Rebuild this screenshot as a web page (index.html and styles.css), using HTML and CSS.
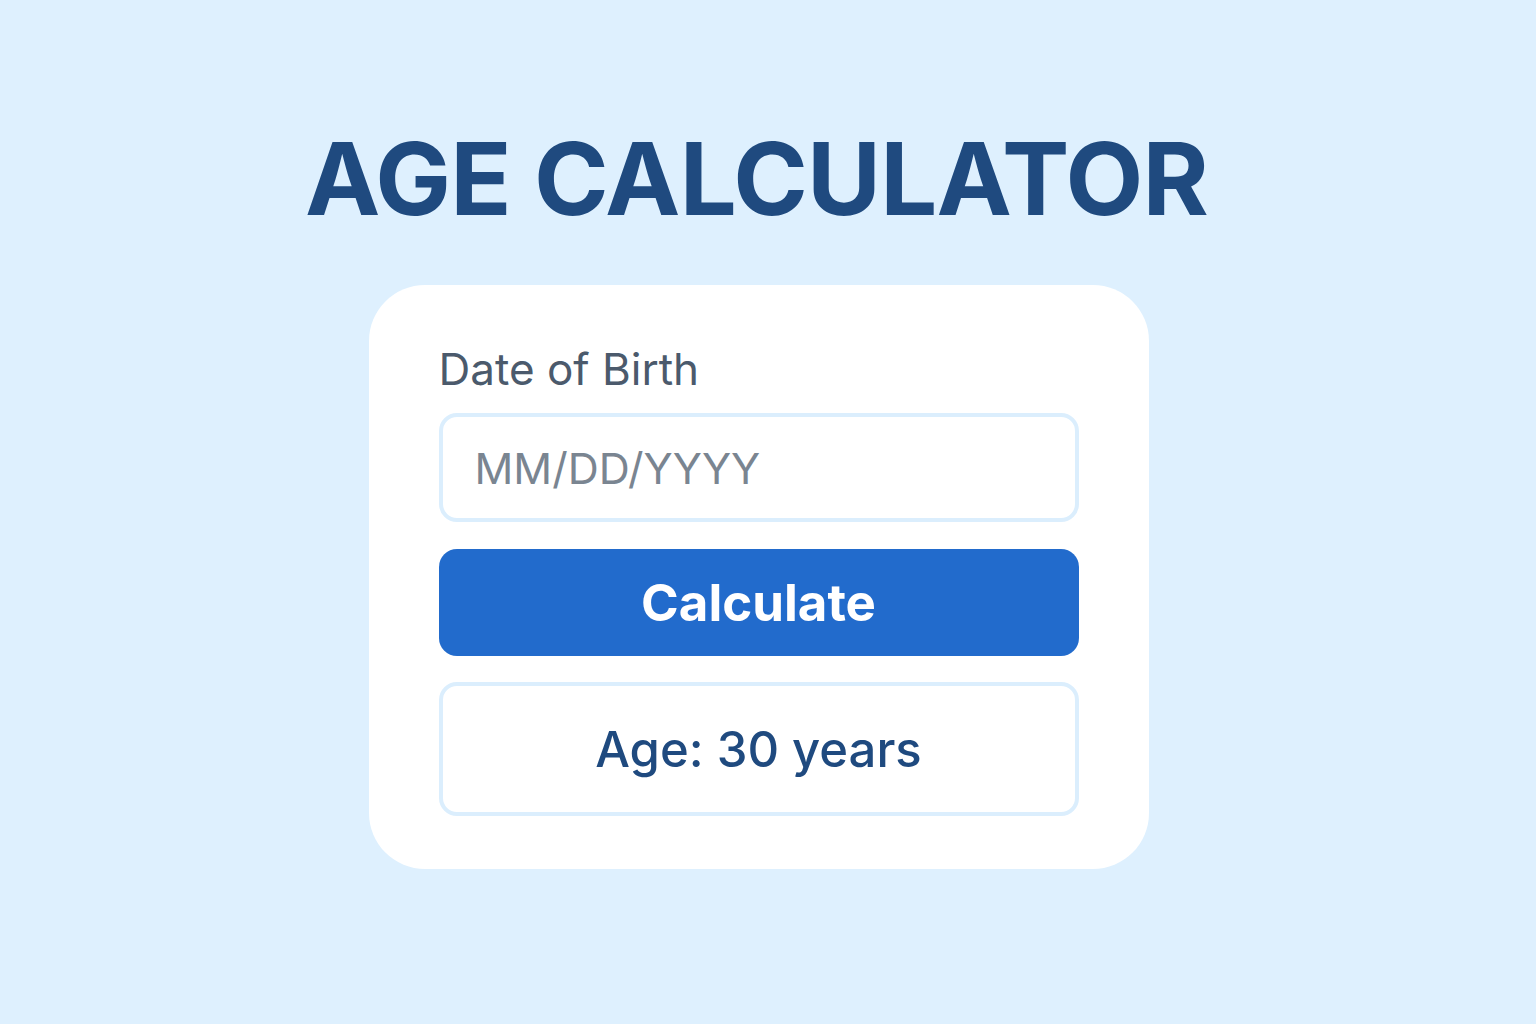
FILE: index.html
```html
<!DOCTYPE html>
<html lang="en">
<head>
    <meta charset="UTF-8">
    <meta name="viewport" content="width=device-width, initial-scale=1.0">
    <title>Age Calculator</title>
    <link rel="stylesheet" href="styles.css">
</head>
<body>
    <main class="page">
        <h1 class="title">AGE CALCULATOR</h1>

        <div class="card">
            <label for="dob" class="field-label">Date of Birth</label>
            <input type="text" id="dob" class="date-input" placeholder="MM/DD/YYYY">

            <button class="calc-btn" onclick="calculateAge()">Calculate</button>

            <div class="result-box" id="ageResult">Age: 30 years</div>
        </div>
    </main>

    <script>
        function calculateAge() {
            let value = document.getElementById("dob").value.trim();
            let parts = value.split("/");
            if (parts.length !== 3) return;

            let birth = new Date(parts[2], parts[0] - 1, parts[1]);
            if (isNaN(birth)) return;

            let today = new Date();
            let age = today.getFullYear() - birth.getFullYear();
            let m = today.getMonth() - birth.getMonth();
            if (m < 0 || (m === 0 && today.getDate() < birth.getDate())) {
                age--;
            }

            document.getElementById("ageResult").innerText = `Age: ${age} years`;
        }
    </script>
</body>
</html>
```

FILE: styles.css
```css
:root {
    --background: #def0fe;
    --navy: #1f4a7f;
    --primary-color: #226bcc;
    --soft-border: #dbeefd;
    --label-color: #4b5a6c;
    --placeholder: #7a8591;
}

* {
    box-sizing: border-box;
    margin: 0;
    padding: 0;
}

body {
    font-family: 'Inter', 'Noto Sans', sans-serif;
    background-color: var(--background);
    min-height: 100vh;
}

.page {
    display: flex;
    flex-direction: column;
    align-items: center;
    padding-top: 128px;
    padding-right: 19px;
}

.title {
    font-size: 101px;
    line-height: 1;
    font-weight: 700;
    letter-spacing: -0.8px;
    color: var(--navy);
    margin-bottom: 56px;
    margin-right: 4px;
}

.card {
    width: 780px;
    background: #fff;
    border-radius: 56px;
    padding: 58px 70px 53px;
    display: flex;
    flex-direction: column;
}

.field-label {
    font-size: 44px;
    line-height: 52px;
    color: var(--label-color);
    margin-bottom: 18px;
}

.date-input {
    height: 109px;
    border: 4px solid var(--soft-border);
    border-radius: 18px;
    padding: 0 32px;
    font-family: inherit;
    font-size: 43px;
    color: var(--navy);
    outline: none;
}

.date-input::placeholder {
    color: var(--placeholder);
}

.date-input:focus {
    border-color: #b9dcfb;
}

.calc-btn {
    margin-top: 27px;
    height: 107px;
    border: none;
    border-radius: 18px;
    background-color: var(--primary-color);
    color: #fff;
    font-family: inherit;
    font-size: 51px;
    font-weight: 700;
    cursor: pointer;
}

.calc-btn:hover {
    background-color: #1c5fb8;
}

.result-box {
    margin-top: 26px;
    height: 134px;
    border: 4px solid var(--soft-border);
    border-radius: 18px;
    display: flex;
    align-items: center;
    justify-content: center;
    font-size: 49px;
    font-weight: 500;
    color: var(--navy);
}
```
